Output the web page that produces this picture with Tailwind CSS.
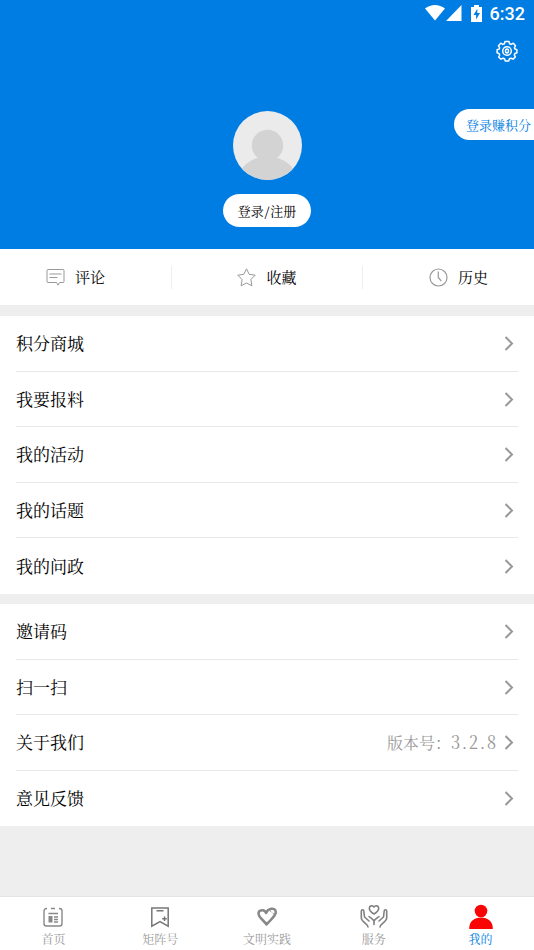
<!DOCTYPE html>
<html lang="zh-CN">
<head>
<meta charset="utf-8">
<meta name="viewport" content="width=device-width, initial-scale=1">
<title>我的</title>
<script src="https://cdn.jsdelivr.net/npm/@tailwindcss/browser@4"></script>
</head>
<body class="flex min-h-screen flex-col bg-[#eeeeee] text-black font-['Noto_Serif_CJK_SC','Noto_Sans_CJK_SC',serif]">
<svg class="hidden">
  <symbol id="chevron" viewBox="0 0 10 16"><path d="M1.5 2 8 8.500 1.5 15" fill="none" stroke="currentColor" stroke-width="2"/></symbol>
</svg>

<header class="relative flex h-[249px] flex-col items-center bg-[#007de3]">
  <div class="flex h-[26px] w-full items-center justify-end pr-[9px] text-white">
    <svg class="h-[16px] w-[20px]" viewBox="0 0 20 16" fill="currentColor"><path d="M0 3.6C6-1.2 14-1.2 20 3.6L10 15.6Z"/></svg>
    <svg class="ml-[1px] h-[16px] w-[16px]" viewBox="0 0 16 16" fill="currentColor"><path d="M15.5 0v16H0Z"/></svg>
    <svg class="ml-[9px] h-[17px] w-[11px]" viewBox="0 0 11 17" fill="currentColor"><path d="M3 0h5v2h3v15H0V2h3Z"/><path d="M6.4 3.7 2.5 10h2.6v4.5L9 8H6.3Z" fill="#007de3"/></svg>
    <span class="ml-[8px] pt-[1px] font-['Roboto',sans-serif] text-[18px] leading-[24px] font-medium">6:32</span>
  </div>
  <div class="flex w-full justify-end pt-[14px] pr-[16px]">
    <button class="text-white" aria-label="设置">
      <svg class="block h-[22px] w-[22px]" viewBox="0 0 22 22" fill="none" stroke="currentColor" stroke-width="1.5" stroke-linejoin="round"><path d="M9 1.5h4l.6 2.2 1.6.7 2.1-1.2 2.2 2.5-1.1 2.1.5 1.2 2 .7v3l-2 .8-.6 1.4 1 2-2.3 2.3-2-1-1.5.6-.8 2.1H9.3l-.8-2.1-1.5-.6-2 1L2.700 17l1-2-.6-1.400-2-.8v-3l2-.7.5-1.200L2.500 5.700 4.700 3.200l2.100 1.200 1.600-.7Z"/><circle cx="11" cy="11" r="4.300"/><ellipse cx="11" cy="11" rx="1.500" ry="2"/></svg>
    </button>
  </div>
  <svg class="mt-[49px] h-[69px] w-[69px] shrink-0 rounded-full" viewBox="0 0 69 69"><rect width="69" height="69" fill="#ebebeb"/><circle cx="34.500" cy="34.500" r="15.700" fill="#d3d3d3"/><ellipse cx="34.500" cy="73" rx="31" ry="27.500" fill="#d3d3d3"/></svg>
  <button class="mt-[14px] h-[33px] rounded-full bg-white px-[15px] text-[13px] leading-[20px] [font-feature-settings:'hwid']">登录/注册</button>
  <a href="#points" class="absolute top-[109px] right-0 flex h-[31px] items-center rounded-l-full bg-white pr-[3px] pl-[12px] text-[13px] leading-[20px] text-[#007de3]">登录赚积分</a>
</header>

<main>
  <nav class="flex h-[56px] items-center justify-between bg-white px-[46px] text-[15px] leading-[20px]" aria-label="我的记录">
    <a href="#comments" class="flex items-center gap-[10px]">
      <svg class="h-[19px] w-[19px] text-[#999999]" viewBox="0 0 19 19" fill="none" stroke="currentColor"><path d="M2 1.500h15a1 1 0 0 1 1 1v11a1 1 0 0 1-1 1h-3.500L12 17.200l-1.500-2.700H2a1 1 0 0 1-1-1v-11a1 1 0 0 1 1-1ZM3.500 6h12M3.500 9.500h8"/></svg>评论</a>
    <span class="h-[23px] w-px bg-[#eeeeee]"></span>
    <a href="#favorites" class="flex items-center gap-[10px]">
      <svg class="h-[19px] w-[19px] text-[#999999]" viewBox="0 0 19 19" fill="none" stroke="currentColor" stroke-linejoin="round"><path d="M9.500.8 12.200 6.300l6 .9-4.300 4.300 1 6.300-5.400-2.800-5.400 2.800 1-6.300L.8 7.200l6-.9Z"/></svg>收藏</a>
    <span class="h-[23px] w-px bg-[#eeeeee]"></span>
    <a href="#history" class="flex items-center gap-[10px]">
      <svg class="h-[19px] w-[19px] text-[#999999]" viewBox="0 0 19 19" fill="none" stroke="currentColor" stroke-width="1.200"><circle cx="9.500" cy="9.500" r="8.500"/><path d="M9.300 3.500v6l3 3.500"/></svg>历史</a>
  </nav>

  <ul class="mt-[11px] grid min-h-[278px] auto-rows-fr divide-y divide-[#e8e8e8] bg-white px-[16px] text-[17px] leading-[24px]">
    <li><a href="#mall" class="flex h-full items-center justify-between pr-[4px]">积分商城<svg class="h-[16px] w-[10px] text-[#999999]"><use href="#chevron"/></svg></a></li>
    <li><a href="#report" class="flex h-full items-center justify-between pr-[4px]">我要报料<svg class="h-[16px] w-[10px] text-[#999999]"><use href="#chevron"/></svg></a></li>
    <li><a href="#activities" class="flex h-full items-center justify-between pr-[4px]">我的活动<svg class="h-[16px] w-[10px] text-[#999999]"><use href="#chevron"/></svg></a></li>
    <li><a href="#topics" class="flex h-full items-center justify-between pr-[4px]">我的话题<svg class="h-[16px] w-[10px] text-[#999999]"><use href="#chevron"/></svg></a></li>
    <li><a href="#politics" class="flex h-full items-center justify-between pr-[4px]">我的问政<svg class="h-[16px] w-[10px] text-[#999999]"><use href="#chevron"/></svg></a></li>
  </ul>

  <ul class="mt-[10px] grid min-h-[222px] auto-rows-fr divide-y divide-[#e8e8e8] bg-white px-[16px] text-[17px] leading-[24px]">
    <li><a href="#invite" class="flex h-full items-center justify-between pr-[4px]">邀请码<svg class="h-[16px] w-[10px] text-[#999999]"><use href="#chevron"/></svg></a></li>
    <li><a href="#scan" class="flex h-full items-center justify-between pr-[4px]">扫一扫<svg class="h-[16px] w-[10px] text-[#999999]"><use href="#chevron"/></svg></a></li>
    <li><a href="#about" class="flex h-full items-center pr-[4px]">关于我们<span class="mr-[8px] ml-auto text-[16px] text-[#999999]">版本号：<span class="text-[18px] [font-feature-settings:'hwid']">3.2.8</span></span><svg class="h-[16px] w-[10px] text-[#999999]"><use href="#chevron"/></svg></a></li>
    <li><a href="#feedback" class="flex h-full items-center justify-between pr-[4px]">意见反馈<svg class="h-[16px] w-[10px] text-[#999999]"><use href="#chevron"/></svg></a></li>
  </ul>
</main>

<nav class="mt-auto grid grid-cols-5 border-t border-[#e4e4e4] bg-white pt-[6px] text-[12px] leading-[16px] text-[#999999]" aria-label="主导航">
  <a href="#home" class="flex flex-col items-center pb-[3px]">
    <svg class="h-[28px] w-[28px] text-[#888888]" viewBox="0 0 28 28" fill="none" stroke="currentColor" stroke-width="1.400"><path d="M8 5.500H7.500a2.500 2.500 0 0 0-2.500 2.500v12.500A2.500 2.500 0 0 0 7.500 23h13a2.500 2.500 0 0 0 2.500-2.500V8a2.500 2.500 0 0 0-2.500-2.500H20M12 5.500h4M9.500 10.500h9.500M15 14h4M15 16.500h4M15 19h4"/><path d="M9.500 13h4v6.500h-4Z" fill="currentColor" stroke="none"/></svg>首页</a>
  <a href="#matrix" class="flex flex-col items-center pb-[3px]">
    <svg class="h-[28px] w-[28px] text-[#777777]" viewBox="0 0 28 28" fill="none" stroke="currentColor" stroke-width="1.500"><path d="M5.800 5h16.400v18.200L14 18.500l-8.200 4.700ZM10.500 7.800h7M18.500 13.500v4.500M16.200 15.700h4.600"/></svg>矩阵号</a>
  <a href="#practice" class="flex flex-col items-center pb-[3px]">
    <svg class="h-[28px] w-[28px] text-[#888888]" viewBox="0 0 28 28" fill="none" stroke="currentColor" stroke-width="2.500" stroke-linejoin="round"><path d="M13.500 21.500C11 17.500 5.500 14.500 5.500 10.500c0-4.200 6.500-4.500 7.500-.5C14.500 5.500 22.500 3.500 22.800 9c.2 4-5.300 7.500-9.300 12.500Z"/><path d="m17 8 4 3" stroke-width="1" stroke-dasharray="1 1"/></svg>文明实践</a>
  <a href="#service" class="flex flex-col items-center pb-[3px]">
    <svg class="h-[28px] w-[28px] text-[#808080]" viewBox="0 0 28 28" fill="none" stroke="currentColor" stroke-width="1.600" stroke-linejoin="round" stroke-linecap="round"><path d="M14 11c-2-1.200-4.700-3.500-4.700-5.800C9.300 2.600 12.700 2 14 4c1.300-2 4.700-1.400 4.700 1.200 0 2.300-2.700 4.600-4.700 5.800Z"/><path d="M8 24c-.5-3.500-6.500-5-6.700-9V8c0-1.700 2.400-1.700 2.500 0l.7 6 4.500 4M14 21.500V18c-1-1.800-3.500-3.200-5-4.500M20 24c.5-3.500 6.500-5 6.700-9V8c0-1.700-2.400-1.700-2.500 0l-.7 6-4.500 4M14 18c1-1.800 3.500-3.200 5-4.500"/></svg>服务</a>
  <a href="#me" aria-current="page" class="flex flex-col items-center pb-[3px] text-[#007de3]">
    <svg class="h-[28px] w-[28px] text-[#fa0505]" viewBox="0 0 28 28" fill="currentColor"><circle cx="14" cy="8" r="6.300"/><path d="M2.200 26C2 18.500 7 14.500 14 14.500S26 18.500 25.800 26Z"/></svg>我的</a>
</nav>
</body>
</html>
